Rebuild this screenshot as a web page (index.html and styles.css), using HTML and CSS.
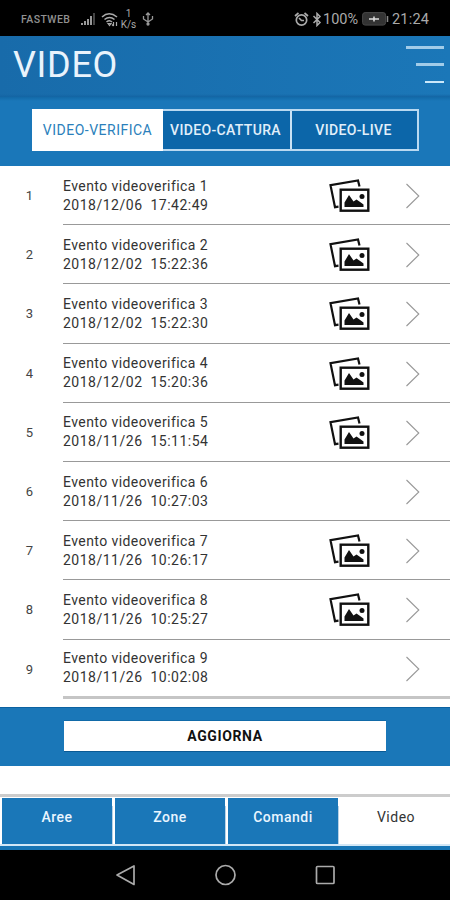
FILE: index.html
```html
<!DOCTYPE html>
<html lang="it">
<head>
<meta charset="utf-8">
<title>Video</title>
<link rel="stylesheet" href="styles.css">
</head>
<body>
<svg class="defs" aria-hidden="true">
  <symbol id="photos" viewBox="0 0 44 36">
    <path d="M31.500 8.500 30 2.500 2.500 7.200 7 29.200l3.500-.5" fill="none" stroke="#111" stroke-width="2.200"/>
    <rect x="12.700" y="11.700" width="27.600" height="21" fill="#fff" stroke="#111" stroke-width="2.400"/>
    <path d="M16.500 29V24.500l4.500-7.500 4.500 6.500 3-2 5 3.500 2 1.500V29z" fill="#111"/>
    <circle cx="34" cy="18.500" r="2.500" fill="#111"/>
  </symbol>
  <symbol id="chevron" viewBox="0 0 16 26"><path d="m1.500 1 12.300 12L1.500 25" fill="none" stroke="#999" stroke-width="1.100"/></symbol>
</svg>
<div class="phone">
  <div class="status">
    <span class="carrier">FASTWEB</span>
    <svg class="signal" width="15" height="14" viewBox="0 0 15 14" fill="#999"><path d="M0 11h2v2H0zM3 9h2v4H3zM6 7h2v6H6zM9 4h2v9H9z"/><path d="M12 1h2v12h-2z" fill="#444"/></svg>
    <svg class="wifi" width="18" height="15" viewBox="0 0 18 15" fill="none" stroke="#aaa" stroke-width="1.600"><path d="M1 5Q8 -1.500 16 5M3.500 7.500Q8.500 3.500 13.500 7.500M5.500 10Q8.500 7.500 11 10"/><path d="m7 11.500 1.500 2 1.500-2zM12.500 10v4m-1.500-1.500 1.500 1.500M15.500 14v-4" stroke-width="1.200"/></svg>
    <span class="speed"><span>1</span><span>K/s</span></span>
    <svg class="usb" width="12" height="14" viewBox="0 0 12 14" fill="none" stroke="#999" stroke-width="1.300"><path d="M6 13V1M4 3l2-2 2 2M1.500 4v3L6 10l4.500-3V4"/><circle cx="6" cy="12" r="1" fill="#999"/></svg>
    <span class="gap"></span>
    <svg class="alarm" width="15" height="15" viewBox="0 0 15 15" fill="none" stroke="#aaa" stroke-width="1.700"><circle cx="7.500" cy="8" r="5.200"/><path d="m1 4 3.500-3M14 4l-3.500-3M5 6l2.500 2.500H10"/></svg>
    <svg class="bt" width="10" height="15" viewBox="0 0 10 15" fill="none" stroke="#aaa" stroke-width="1.500"><path d="m1.500 4 6.500 6.500L5 13.500V1.500l3 3L1.500 11"/></svg>
    <span class="pct">100%</span>
    <svg class="battery" width="27" height="14" viewBox="0 0 27 14"><rect x=".6" y=".6" width="23" height="12.500" rx="2.500" fill="#333" stroke="#484848"/><path d="M25.500 4v6" stroke="#888" stroke-width="1.500"/><path d="M7 7h10M12 4.500v5" stroke="#ddd" stroke-width="1.500"/></svg>
    <span class="clock">21:24</span>
  </div>
  <header class="header">
    <h1>VIDEO</h1>
    <div class="menu"><i></i><i></i><i></i></div>
  </header>
  <div class="tabs-bar">
    <div class="tabs">
      <div class="tab active">VIDEO-VERIFICA</div>
      <div class="tab">VIDEO-CATTURA</div>
      <div class="tab">VIDEO-LIVE</div>
    </div>
  </div>
  <div class="list" id="list"></div>
  <div class="action"><div class="button">AGGIORNA</div></div>
  <div class="spacer"></div>
  <nav class="nav">
    <div class="item">Aree</div>
    <div class="item">Zone</div>
    <div class="item">Comandi</div>
    <div class="item current">Video</div>
  </nav>
  <div class="system">
    <svg width="450" height="50" viewBox="0 0 450 50" fill="none" stroke="#aaa" stroke-width="1.700"><path d="M134 16v18.500L117 25z" stroke-linejoin="round"/><circle cx="225.500" cy="25" r="9.500"/><rect x="316.500" y="16.500" width="17.500" height="17" rx="1"/></svg>
  </div>
</div>
<script src="app.js"></script>
</body>
</html>
```
FILE: styles.css
```css
* { box-sizing: border-box; }
body { margin: 0; background: #fff; font-family: Roboto, sans-serif; }
.defs { position: absolute; width: 0; height: 0; }
svg { display: block; flex: none; }
.phone { width: 450px; height: 900px; overflow: hidden; display: flex; flex-direction: column; }
.status { height: 36px; flex: none; background: #000; color: #aaa; display: flex; align-items: center; padding: 2px 20px 0 21px; }
.carrier { font-size: 10.5px; font-weight: 500; color: #909090; width: 51px; margin-right: 9px; letter-spacing: .4px; }
.signal { margin-right: 5px; }
.wifi { margin-right: 1px; }
.speed { display: flex; flex-direction: column; align-items: center; font-size: 10px; line-height: 11px; width: 17px; }
.usb { margin-left: 5px; }
.gap { flex: 1; }
.alarm { margin-right: 3px; }
.bt { margin-right: 1px; }
.pct { font-size: 14.5px; width: 39px; letter-spacing: 0; }
.battery { margin-right: 3px; }
.clock { font-size: 14.5px; width: 38px; white-space: nowrap; letter-spacing: .2px; }
.header { height: 61px; flex: none; background: linear-gradient(to top, #1364a3, rgba(19, 100, 163, 0) 3px), linear-gradient(90deg, #186baa, #1b77b8); display: flex; justify-content: space-between; padding: 0 6px 0 13px; }
h1 { margin: 8px 0 0; font-size: 36px; line-height: 42px; font-weight: 400; color: #e9f3fc; letter-spacing: .7px; }
.menu { display: flex; flex-direction: column; align-items: flex-end; gap: 14px; padding-top: 10px; }
.menu i { display: block; height: 3px; width: 38px; background: #a2cce9; }
.menu i + i { width: 28px; }
.menu i + i + i { width: 19px; height: 2px; margin-top: 1px; background: #cbe8fa; }
.tabs-bar { height: 69px; flex: none; background: linear-gradient(#1269a8, #1a77b9 4px); padding: 12px 31px 0 32px; }
.tabs { height: 42px; border: 2px solid #b9d9f1; display: grid; grid-template-columns: 129px 127px 1fr; background: #0c66a9; }
.tab { display: flex; align-items: center; justify-content: center; font-size: 14px; font-weight: 500; color: #e1effa; white-space: nowrap; letter-spacing: .35px; padding-right: 2px; }
.tab + .tab + .tab { border-left: 2px solid #c9e2f5; }
.tab.active { background: #fff; color: #2b7fbb; font-weight: 400; margin: -2px 0 -2px -2px; letter-spacing: .5px; padding-right: 0; }
.list { height: 541px; flex: none; }
.row { height: 59.2px; display: flex; }
.num { width: 63px; padding-right: 4px; display: flex; align-items: center; justify-content: center; font-size: 13px; color: #444; }
.body { flex: 1; border-bottom: 1.500px solid #999; display: flex; align-items: center; }
.row:last-child .body { border-bottom: 3px solid #c5c5c5; }
.text { width: 265px; font-size: 14px; line-height: 19px; color: #333; letter-spacing: .42px; padding-top: 1px; }
.text div + div { letter-spacing: .5px; white-space: pre; }
.photos { width: 44px; height: 36px; margin-top: 2px; }
.chevron { width: 16px; height: 26px; margin-left: auto; margin-right: 29px; margin-top: 2px; }
.action { height: 59px; flex: none; background: #1a77b8; border-top: 1px solid #0b62a1; padding: 13px 64px 0; }
.button { height: 30px; background: #fff; display: flex; align-items: center; justify-content: center; font-size: 14px; font-weight: 700; color: #111; box-shadow: 0 1px #0a5a94, 0 -1px #116aa8; letter-spacing: .6px; }
.spacer { height: 31px; flex: none; border-bottom: 3px solid #ccc; background: #fff; }
.nav { height: 53px; flex: none; border-bottom: 4px solid #1775b5; box-shadow: inset 0 -2px #d2e7f6; background: #fff; display: grid; grid-template-columns: repeat(4, 110px); column-gap: 3px; padding: 1px 0 2px 2px; }
.item { background: #1a77b8; color: #e9f5ff; font-size: 14px; font-weight: 500; text-align: center; line-height: 39px; letter-spacing: .5px; box-shadow: 1px 8px #b8d2e6; clip-path: inset(0 -2px 0 0); }
.item.current { background: #fff; color: #333; font-weight: 400; box-shadow: none; letter-spacing: .5px; }
.system { height: 50px; flex: none; background: #000; }
```
FILE: app.js
```js
const events = [
  ["2018/12/06  17:42:49", true],
  ["2018/12/02  15:22:36", true],
  ["2018/12/02  15:22:30", true],
  ["2018/12/02  15:20:36", true],
  ["2018/11/26  15:11:54", true],
  ["2018/11/26  10:27:03", false],
  ["2018/11/26  10:26:17", true],
  ["2018/11/26  10:25:27", true],
  ["2018/11/26  10:02:08", false]
];
document.getElementById("list").innerHTML = events.map(([date, photos], i) => `
  <div class="row">
    <div class="num">${i + 1}</div>
    <div class="body">
      <div class="text"><div>Evento videoverifica ${i + 1}</div><div>${date}</div></div>
      ${photos ? '<svg class="photos"><use href="#photos"/></svg>' : ""}
      <svg class="chevron"><use href="#chevron"/></svg>
    </div>
  </div>`).join("");
```
